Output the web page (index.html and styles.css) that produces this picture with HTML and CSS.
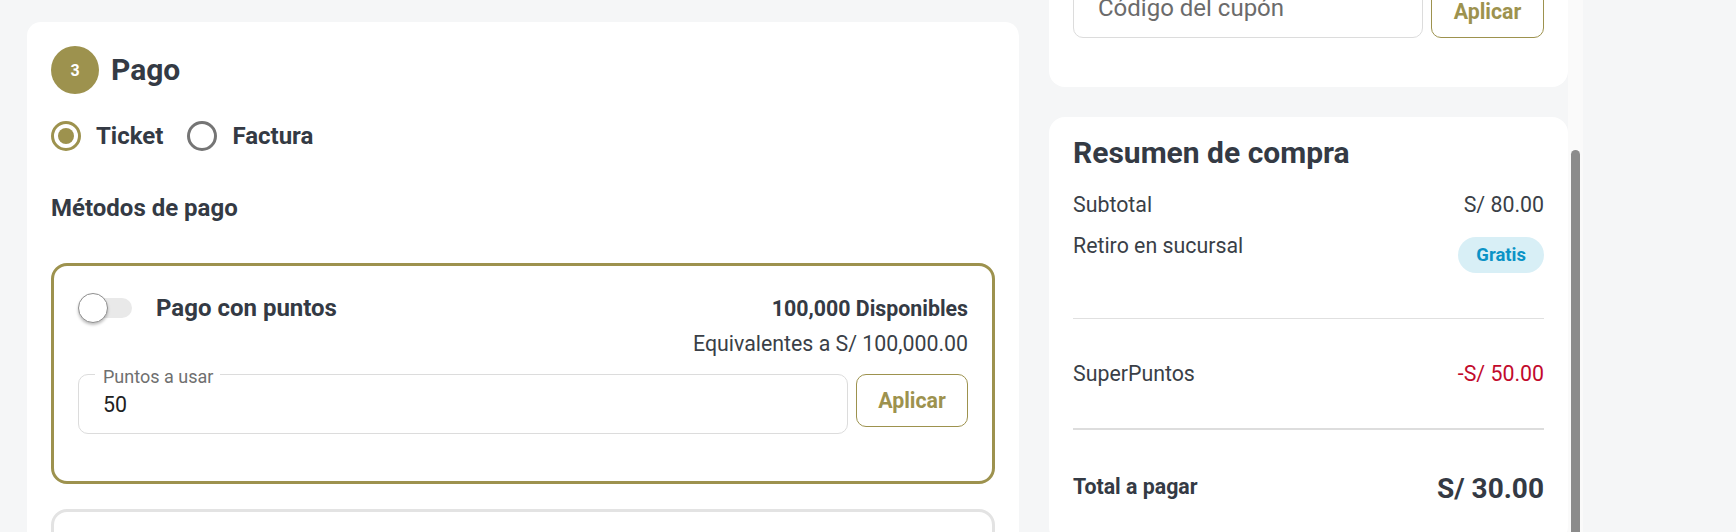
FILE: index.html
```html
<!DOCTYPE html>
<html lang="es">
<head>
<meta charset="utf-8">
<title>Pago</title>
<link rel="stylesheet" href="styles.css">
</head>
<body>
<div class="page">
  <main class="main-col">
    <section class="card pay-card">
      <div class="step-head">
        <span class="step-num">3</span>
        <h2 class="step-title">Pago</h2>
      </div>

      <div class="radios">
        <label class="radio">
          <span class="radio-ring checked"><span class="radio-dot"></span></span>
          <span class="radio-label">Ticket</span>
        </label>
        <label class="radio">
          <span class="radio-ring"></span>
          <span class="radio-label">Factura</span>
        </label>
      </div>

      <h3 class="methods-title">Métodos de pago</h3>

      <div class="method-box active">
        <div class="method-head">
          <span class="toggle"><span class="toggle-track"></span><span class="toggle-thumb"></span></span>
          <span class="method-name">Pago con puntos</span>
          <span class="method-avail">100,000 Disponibles</span>
        </div>
        <div class="equiv">Equivalentes a S/ 100,000.00</div>
        <div class="field-row">
          <div class="field">
            <span class="field-label">Puntos a usar</span>
            <span class="field-value">50</span>
          </div>
          <button class="btn-outline">Aplicar</button>
        </div>
      </div>

      <div class="method-box"></div>
    </section>
  </main>

  <aside class="side">
    <div class="side-scroll">
      <section class="card side-card coupon-card">
        <div class="field-row end">
          <div class="field">
            <span class="field-placeholder">Código del cupón</span>
          </div>
          <button class="btn-outline coupon-btn">Aplicar</button>
        </div>
      </section>

      <section class="card side-card summary-card">
        <h2 class="summary-title">Resumen de compra</h2>
        <div class="sum-row first">
          <span>Subtotal</span>
          <span>S/ 80.00</span>
        </div>
        <div class="sum-row second">
          <span>Retiro en sucursal</span>
          <span class="chip">Gratis</span>
        </div>
        <hr class="divider">
        <div class="sum-row points">
          <span>SuperPuntos</span>
          <span class="neg">-S/ 50.00</span>
        </div>
        <hr class="divider thick">
        <div class="sum-row total">
          <span class="total-label">Total a pagar</span>
          <span class="total-amount">S/ 30.00</span>
        </div>
      </section>
    </div>
    <div class="scrollbar"><div class="scroll-thumb"></div></div>
  </aside>
</div>
</body>
</html>
```

FILE: styles.css
```css
* { box-sizing: border-box; }

html, body {
  margin: 0;
  height: 532px;
  overflow: hidden;
}

body {
  background: #f5f6f7;
  font-family: Roboto, "Liberation Sans", Arial, sans-serif;
  color: #363c45;
  font-size: 21.33px;
}

.page {
  display: flex;
  align-items: flex-start;
  padding-left: 27px;
  gap: 30px;
  height: 532px;
}

.main-col {
  width: 992px;
  margin-top: 22px;
}

.card {
  background: #ffffff;
  border-radius: 14px;
}

.pay-card {
  padding: 24px 24px 40px;
}

.step-head {
  display: flex;
  align-items: center;
  gap: 12px;
  height: 48px;
}

.step-num {
  width: 48px;
  height: 48px;
  border-radius: 50%;
  background: #9d924e;
  color: #fff;
  font-weight: 700;
  font-size: 16px;
  display: flex;
  align-items: center;
  justify-content: center;
}

.step-title {
  margin: 0;
  font-size: 30px;
  font-weight: 700;
  line-height: 1;
  color: #343a44;
}

.radios {
  display: flex;
  align-items: center;
  height: 30px;
  margin-top: 27px;
  gap: 24px;
}

.radio {
  display: flex;
  align-items: center;
  gap: 15px;
}

.radio-ring {
  width: 30px;
  height: 30px;
  border-radius: 50%;
  border: 3px solid #757575;
  display: flex;
  align-items: center;
  justify-content: center;
}

.radio-ring.checked {
  border-color: #9d924e;
}

.radio-dot {
  width: 16px;
  height: 16px;
  border-radius: 50%;
  background: #9d924e;
}

.radio-label {
  font-size: 24px;
  font-weight: 700;
  color: #343a44;
}

.methods-title {
  margin: 42px 0 0;
  font-size: 24px;
  line-height: 30px;
  font-weight: 700;
  color: #343a44;
}

.method-box {
  margin-top: 40px;
  border: 3px solid #e3e3e3;
  border-radius: 16px;
  height: 100px;
}

.method-box.active {
  border-color: #9d924e;
  height: auto;
  padding: 24px 24px 47px;
}

.method-box.active + .method-box {
  margin-top: 25px;
}

.method-head {
  display: flex;
  align-items: center;
  height: 36px;
}

.toggle {
  position: relative;
  width: 54px;
  height: 30px;
  flex: none;
}

.toggle-track {
  position: absolute;
  left: 2px;
  top: 5px;
  width: 52px;
  height: 20px;
  border-radius: 10px;
  background: #e9e9e9;
}

.toggle-thumb {
  position: absolute;
  left: 0;
  top: 0;
  width: 30px;
  height: 30px;
  border-radius: 50%;
  background: #fff;
  border: 1px solid #8f8f8f;
  box-shadow: 0 2px 3px rgba(0, 0, 0, 0.25);
}

.method-name {
  margin-left: 24px;
  font-size: 24px;
  font-weight: 700;
  color: #343a44;
}

.method-avail {
  margin-left: auto;
  font-weight: 700;
  color: #343a44;
}

.equiv {
  margin-top: 3px;
  text-align: right;
  line-height: 30px;
  color: #3a3f47;
}

.field-row {
  display: flex;
  align-items: flex-start;
  gap: 8px;
  margin-top: 15px;
}

.field-row.end {
  align-items: flex-end;
  margin-top: 0;
}

.field {
  position: relative;
  flex: 1;
  height: 60px;
  border: 1px solid #dcdcdc;
  border-radius: 10px;
  padding: 0 24px;
  display: flex;
  align-items: center;
  font-size: 24px;
  color: #212121;
  background: #fff;
}

.field-value {
  font-size: 21.33px;
}

.field-label {
  position: absolute;
  top: -7px;
  left: 16px;
  padding: 0 7px 0 8px;
  background: #fff;
  font-size: 18px;
  line-height: 18px;
  color: #6f6f6f;
}

.field-placeholder {
  color: #6b6b6b;
}

.btn-outline {
  width: 112px;
  height: 53px;
  flex: none;
  border: 1px solid #9d924e;
  border-radius: 10px;
  background: #fff;
  color: #9d924e;
  font-family: inherit;
  font-size: 21.33px;
  font-weight: 700;
  padding: 0;
}

.coupon-btn {
  width: 113px;
}

.side {
  display: flex;
  align-items: flex-start;
}

.side-scroll {
  width: 519px;
  margin-top: -46px;
}

.side-card {
  border-radius: 16px;
}

.coupon-card {
  padding: 24px 24px 49px;
}

.summary-card {
  margin-top: 30px;
  padding: 18px 24px 40px;
}

.summary-title {
  margin: 0;
  font-size: 30px;
  line-height: 36px;
  font-weight: 700;
  color: #343a44;
}

.sum-row {
  display: flex;
  justify-content: space-between;
  align-items: flex-start;
  line-height: 30px;
  color: #3a3f47;
}

.sum-row.first { margin-top: 19px; }
.sum-row.second { margin-top: 11px; }
.sum-row.points { margin-top: 40px; }
.sum-row.total { margin-top: 42px; }

.chip {
  margin-top: 6px;
  height: 36px;
  padding: 0 18px;
  border-radius: 18px;
  background: #d8eff6;
  color: #0b93c6;
  font-size: 18.5px;
  font-weight: 700;
  display: flex;
  align-items: center;
}

.divider {
  margin: 45px 0 0;
  border: 0;
  height: 1px;
  background: #e0e0e0;
}

.divider.thick {
  margin-top: 39px;
  height: 2px;
  background: #dddddd;
}

.neg {
  color: #c20a2c;
}

.total-label {
  font-weight: 700;
  color: #343a44;
}

.total-amount {
  margin-top: 3px;
  font-size: 28px;
  line-height: 28px;
  font-weight: 700;
  color: #343a44;
}

.scrollbar {
  width: 15px;
  height: 532px;
  background: #fafafa;
  padding-top: 150px;
  flex: none;
}

.scroll-thumb {
  margin-left: 3px;
  width: 9px;
  height: 382px;
  border-radius: 5px 5px 0 0;
  background: #8b8b8b;
}
```
